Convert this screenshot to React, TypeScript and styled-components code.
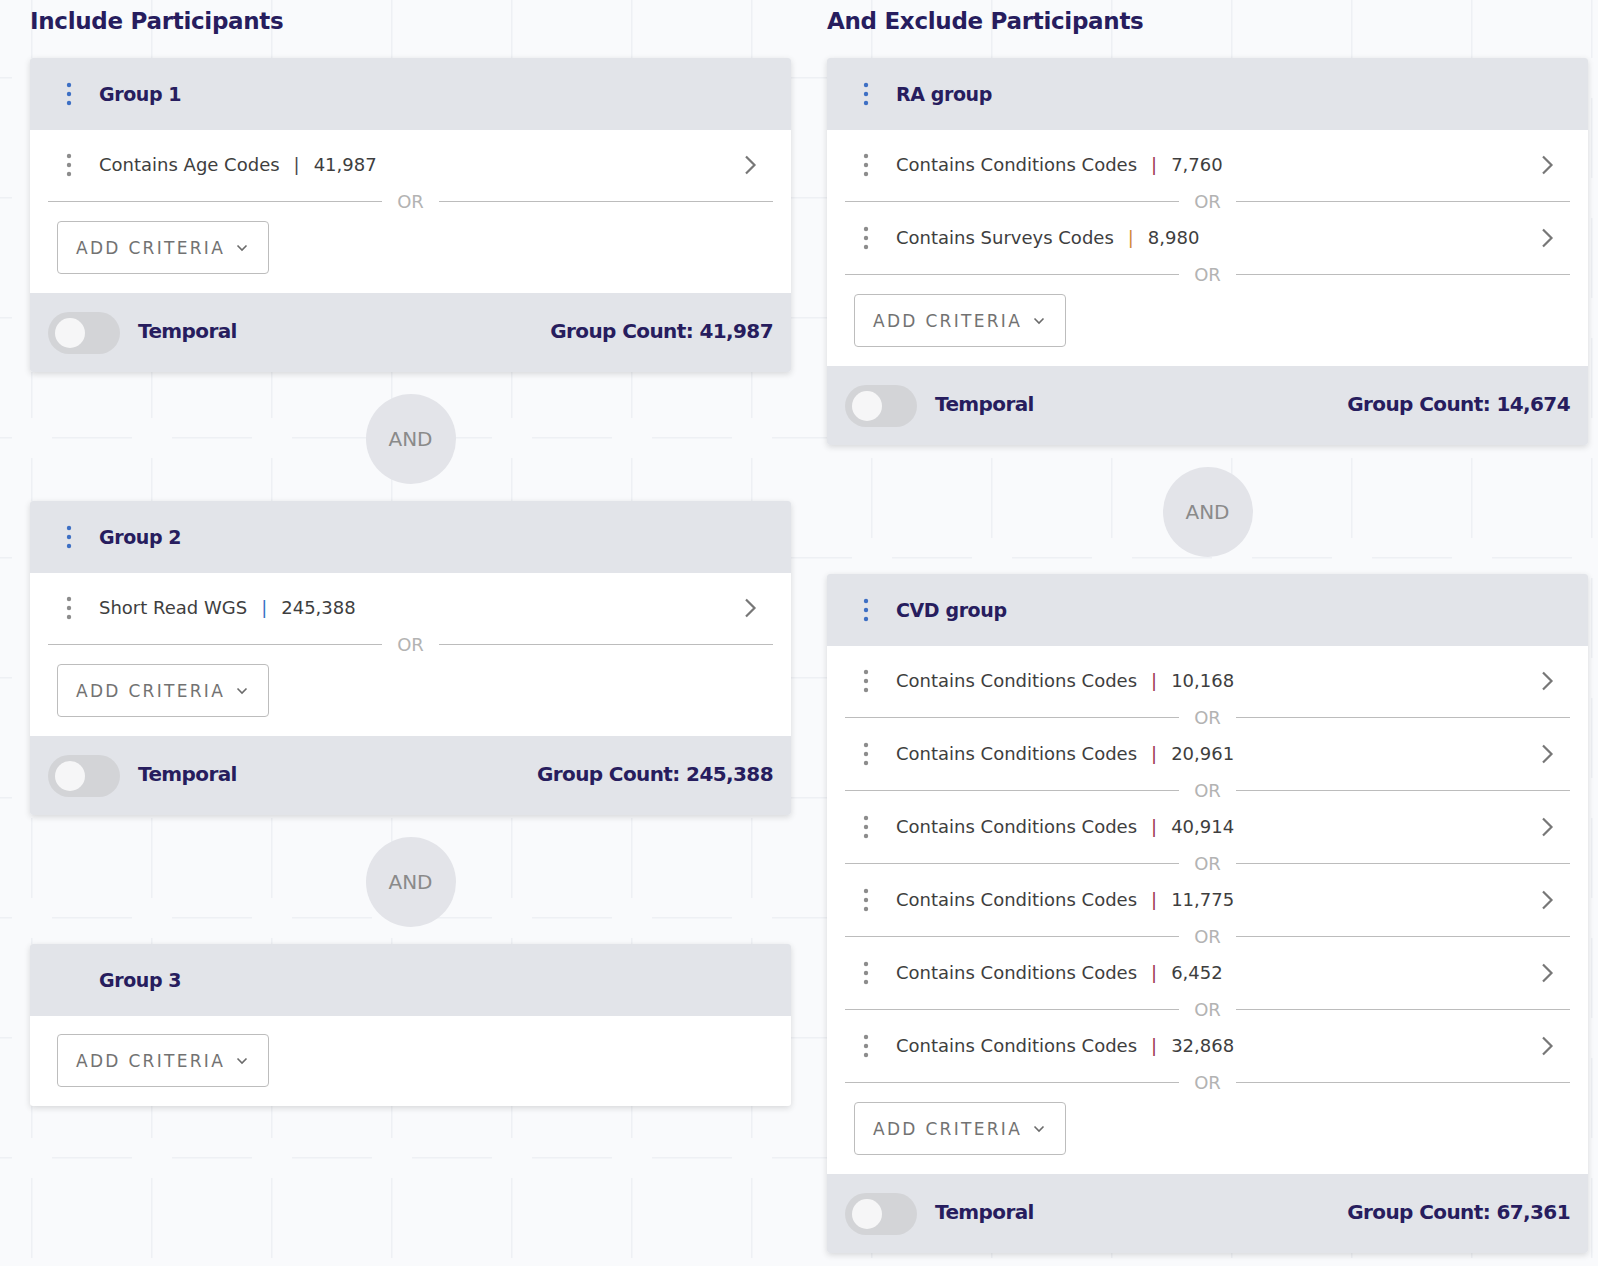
import styled, { createGlobalStyle } from "styled-components";

type Criterion = { label: string; count: string; tone: string };
type Group = { name: string; criteria: Criterion[]; count?: string; menu?: boolean };

const TONE = {
  age: "#4a4a4a",
  wgs: "#3a6fc4",
  conditions: "#9b3550",
  surveys: "#d0893b",
};

const include: Group[] = [
  {
    name: "Group 1",
    menu: true,
    criteria: [{ label: "Contains Age Codes", count: "41,987", tone: TONE.age }],
    count: "41,987",
  },
  {
    name: "Group 2",
    menu: true,
    criteria: [{ label: "Short Read WGS", count: "245,388", tone: TONE.wgs }],
    count: "245,388",
  },
  { name: "Group 3", criteria: [] },
];

const exclude: Group[] = [
  {
    name: "RA group",
    menu: true,
    criteria: [
      { label: "Contains Conditions Codes", count: "7,760", tone: TONE.conditions },
      { label: "Contains Surveys Codes", count: "8,980", tone: TONE.surveys },
    ],
    count: "14,674",
  },
  {
    name: "CVD group",
    menu: true,
    criteria: [
      { label: "Contains Conditions Codes", count: "10,168", tone: TONE.conditions },
      { label: "Contains Conditions Codes", count: "20,961", tone: TONE.conditions },
      { label: "Contains Conditions Codes", count: "40,914", tone: TONE.conditions },
      { label: "Contains Conditions Codes", count: "11,775", tone: TONE.conditions },
      { label: "Contains Conditions Codes", count: "6,452", tone: TONE.conditions },
      { label: "Contains Conditions Codes", count: "32,868", tone: TONE.conditions },
    ],
    count: "67,361",
  },
];

// faint cross pattern behind the canvas
const gridTile = encodeURIComponent(
  `<svg xmlns="http://www.w3.org/2000/svg" width="120" height="120"><g fill="#eef0f4"><rect x="0" y="59" width="40" height="1.5"/><rect x="80" y="59" width="40" height="1.5"/><rect x="59" y="0" width="1.5" height="40"/><rect x="59" y="80" width="1.5" height="40"/></g></svg>`
);

const GlobalStyle = createGlobalStyle`
  html, body {
    margin: 0;
    min-height: 100vh;
    background-color: #f9fafc;
    background-image: url("data:image/svg+xml,${gridTile}");
    background-position: -28px 18px;
  }
  body {
    font-family: "DejaVu Sans", "Noto Sans", sans-serif;
    color: #3c3c3c;
  }
`;

function Dots({ color }: { color: string }) {
  return (
    <svg width="6" height="26" viewBox="0 0 6 26">
      <circle cx="3" cy="4" r="2.2" fill={color} />
      <circle cx="3" cy="13" r="2.2" fill={color} />
      <circle cx="3" cy="22" r="2.2" fill={color} />
    </svg>
  );
}

function ChevronRight() {
  return (
    <svg width="14" height="22" viewBox="0 0 14 22">
      <path d="M3 2.5 L11.5 11 L3 19.5" fill="none" stroke="#777" strokeWidth="2.2" />
    </svg>
  );
}

function ChevronDown() {
  return (
    <svg width="12" height="8" viewBox="0 0 12 8">
      <path d="M1.5 1.5 L6 6 L10.5 1.5" fill="none" stroke="#6b6b6b" strokeWidth="1.6" />
    </svg>
  );
}

function GroupCard({ group }: { group: Group }) {
  return (
    <Card>
      <CardHeader>
        <DotsBox $hidden={!group.menu}>
          <Dots color="#3d6fc4" />
        </DotsBox>
        <GroupName>{group.name}</GroupName>
      </CardHeader>
      <CardBody>
        {group.criteria.map((c, i) => (
          <div key={i}>
            <CriteriaRow>
              <DotsBox>
                <Dots color="#8c8c8c" />
              </DotsBox>
              <CriteriaLabel>{c.label}</CriteriaLabel>
              <Pipe $color={c.tone}>|</Pipe>
              <CriteriaCount>{c.count}</CriteriaCount>
              <Spacer />
              <ChevronBox>
                <ChevronRight />
              </ChevronBox>
            </CriteriaRow>
            <OrDivider>
              <OrLine />
              <OrText>OR</OrText>
              <OrLine />
            </OrDivider>
          </div>
        ))}
        <AddButton>
          ADD CRITERIA
          <ChevronDown />
        </AddButton>
      </CardBody>
      {group.count && (
        <CardFooter>
          <Toggle>
            <Knob />
          </Toggle>
          <FooterLabel>Temporal</FooterLabel>
          <Spacer />
          <FooterLabel>Group Count: {group.count}</FooterLabel>
        </CardFooter>
      )}
    </Card>
  );
}

function Column({ title, groups }: { title: string; groups: Group[] }) {
  return (
    <ColumnWrap>
      <ColumnTitle>{title}</ColumnTitle>
      {groups.map((g, i) => (
        <div key={g.name}>
          {i > 0 && (
            <Connector>
              <AndBubble>AND</AndBubble>
            </Connector>
          )}
          <GroupCard group={g} />
        </div>
      ))}
    </ColumnWrap>
  );
}

export default function App() {
  return (
    <>
      <GlobalStyle />
      <Page>
        <Column title="Include Participants" groups={include} />
        <Column title="And Exclude Participants" groups={exclude} />
      </Page>
    </>
  );
}

const Page = styled.div`
  display: grid;
  grid-template-columns: 761px 761px;
  column-gap: 36px;
  padding: 0 0 20px 30px;
  align-items: start;
`;

const ColumnWrap = styled.div`
  display: flex;
  flex-direction: column;
`;

const ColumnTitle = styled.h2`
  margin: 0;
  height: 58px;
  padding-top: 8px;
  box-sizing: border-box;
  font-size: 23px;
  font-weight: 700;
  color: #271d5e;
  letter-spacing: -0.3px;
`;

const Card = styled.div`
  background: #fff;
  border-radius: 3px;
  overflow: hidden;
  box-shadow: 0 2px 6px rgba(0, 0, 0, 0.14);
`;

const CardHeader = styled.div`
  display: flex;
  align-items: center;
  height: 72px;
  padding: 0 18px;
  background: #e2e4e9;
`;

const DotsBox = styled.div<{ $hidden?: boolean }>`
  width: 42px;
  display: flex;
  justify-content: center;
  align-items: center;
  visibility: ${(p) => (p.$hidden ? "hidden" : "visible")};
`;

const GroupName = styled.div`
  margin-left: 9px;
  font-size: 19px;
  font-weight: 700;
  letter-spacing: -0.4px;
  color: #271d5e;
`;

const CardBody = styled.div`
  padding: 6px 0 19px;
`;

const CriteriaRow = styled.div`
  display: flex;
  align-items: center;
  height: 57px;
  padding: 0 18px;
  font-size: 18px;
`;

const CriteriaLabel = styled.span`
  margin-left: 9px;
  color: #3e3e3e;
`;

const Pipe = styled.span<{ $color: string }>`
  margin: 0 14px;
  color: ${(p) => p.$color};
`;

const CriteriaCount = styled.span`
  color: #3e3e3e;
`;

const Spacer = styled.div`
  flex: 1;
`;

const ChevronBox = styled.div`
  display: flex;
  margin-right: 16px;
`;

const OrDivider = styled.div`
  display: flex;
  align-items: center;
  height: 16px;
  padding: 0 18px;
`;

const OrLine = styled.div`
  flex: 1;
  height: 1px;
  background: #bcbcbc;
`;

const OrText = styled.span`
  margin: 0 15px;
  font-size: 18px;
  color: #b3b3b3;
`;

const AddButton = styled.button`
  display: flex;
  align-items: center;
  gap: 11px;
  margin: 12px 0 0 27px;
  width: 212px;
  height: 53px;
  padding: 0 0 0 18px;
  box-sizing: border-box;
  background: #fff;
  border: 1px solid #bdbdbd;
  border-radius: 4px;
  font-family: inherit;
  font-size: 17px;
  letter-spacing: 2.3px;
  color: #727272;
  cursor: pointer;
`;

const CardFooter = styled.div`
  display: flex;
  align-items: center;
  height: 79px;
  padding: 0 18px;
  background: #e2e4e9;
`;

const Toggle = styled.div`
  width: 72px;
  height: 42px;
  border-radius: 21px;
  background: #d3d4d7;
  display: flex;
  align-items: center;
  padding-left: 7px;
  box-sizing: border-box;
`;

const Knob = styled.div`
  width: 30px;
  height: 30px;
  border-radius: 50%;
  background: #f6f6f7;
`;

const FooterLabel = styled.span`
  margin-left: 18px;
  margin-top: -4px;
  font-size: 20px;
  font-weight: 700;
  letter-spacing: -0.6px;
  color: #271d5e;
`;

const Connector = styled.div`
  display: flex;
  justify-content: center;
  padding: 22px 0 17px;
`;

const AndBubble = styled.div`
  width: 90px;
  height: 90px;
  border-radius: 50%;
  background: #e3e4e9;
  display: flex;
  align-items: center;
  justify-content: center;
  font-size: 20px;
  color: #8a8a8a;
`;
